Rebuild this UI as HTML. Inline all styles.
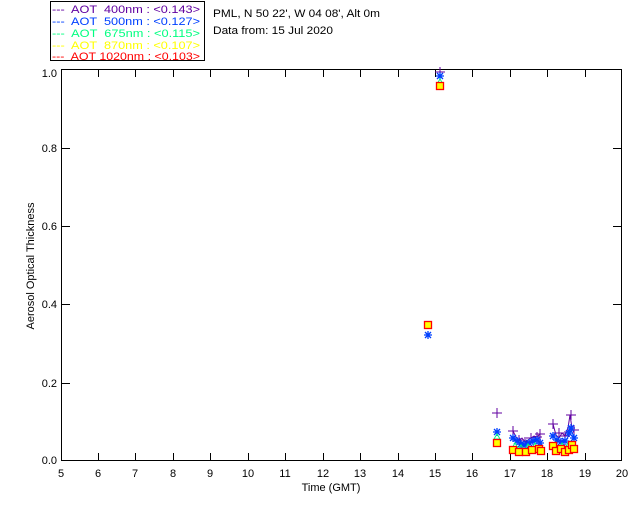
<!DOCTYPE html>
<html><head><style>
html,body{margin:0;padding:0;background:#fff;}
svg{display:block;}
text{font-family:"Liberation Sans",sans-serif;font-size:11px;white-space:pre;}
</style></head><body>
<svg width="640" height="512" viewBox="0 0 640 512" xmlns="http://www.w3.org/2000/svg" xml:space="preserve">
<rect width="640" height="512" fill="#fff"/>
<rect x="50.5" y="1.5" width="154" height="59" fill="#fff" stroke="#000"/>
<g font-size="11">
<text x="52" y="13" fill="#6000a0" textLength="148" lengthAdjust="spacingAndGlyphs">---  AOT  400nm : &lt;0.143&gt;</text>
<text x="52" y="25" fill="#0040ff" textLength="148" lengthAdjust="spacingAndGlyphs">---  AOT  500nm : &lt;0.127&gt;</text>
<text x="52" y="37" fill="#00ff80" textLength="148" lengthAdjust="spacingAndGlyphs">---  AOT  675nm : &lt;0.115&gt;</text>
<text x="52" y="49" fill="#ffff00" textLength="148" lengthAdjust="spacingAndGlyphs">---  AOT  870nm : &lt;0.107&gt;</text>
<text x="52" y="60" fill="#ff0000" textLength="148" lengthAdjust="spacingAndGlyphs">---  AOT 1020nm : &lt;0.103&gt;</text>
</g>
<text x="213" y="17" fill="#000" textLength="167" lengthAdjust="spacingAndGlyphs">PML, N 50 22', W 04 08', Alt 0m</text>
<text x="213" y="34" fill="#000" textLength="120" lengthAdjust="spacingAndGlyphs">Data from: 15 Jul 2020</text>
<rect x="61.5" y="69.5" width="560" height="391" fill="none" stroke="#000"/>
<g stroke="#000">
<path d="M98.5 461v-8M135.5 461v-8M173.5 461v-8M210.5 461v-8M248.5 461v-8M285.5 461v-8M323.5 461v-8M360.5 461v-8M398.5 461v-8M435.5 461v-8M472.5 461v-8M510.5 461v-8M547.5 461v-8M585.5 461v-8"/>
<path d="M98.5 69v8M135.5 69v8M173.5 69v8M210.5 69v8M248.5 69v8M285.5 69v8M323.5 69v8M360.5 69v8M398.5 69v8M435.5 69v8M472.5 69v8M510.5 69v8M547.5 69v8M585.5 69v8"/>
<path d="M61 148.5h9M61 226.5h9M61 304.5h9M61 383.5h9M622 148.5h-9M622 226.5h-9M622 304.5h-9M622 383.5h-9"/>
</g>
<g font-size="10" text-anchor="end">
<text x="57" y="77">1.0</text><text x="57" y="152">0.8</text><text x="57" y="230">0.6</text>
<text x="57" y="308">0.4</text><text x="57" y="387">0.2</text><text x="57" y="464">0.0</text>
</g>
<g font-size="10" text-anchor="middle">
<text x="61" y="477">5</text><text x="98" y="477">6</text><text x="135" y="477">7</text><text x="173" y="477">8</text><text x="210" y="477">9</text><text x="248" y="477">10</text><text x="285" y="477">11</text><text x="323" y="477">12</text><text x="360" y="477">13</text><text x="398" y="477">14</text><text x="435" y="477">15</text><text x="472" y="477">16</text><text x="510" y="477">17</text><text x="547" y="477">18</text><text x="585" y="477">19</text><text x="622" y="477">20</text>
<text x="331" y="491">Time (GMT)</text>
</g>
<text transform="translate(34 266) rotate(-90)" text-anchor="middle" font-size="10">Aerosol Optical Thickness</text>
<polyline fill="none" stroke="#6000a0" points="513,431 516,437 519,440 522,438 525,442 528,440 531,438 534,436 537,437 540,434"/>
<polyline fill="none" stroke="#6000a0" points="553,424 556,435 559,438 562,433 565,436 568,428 570,415 572,428 574,433"/>
<polyline fill="none" stroke="#0040ff" points="513,438 516,441 519,443 522,445 525,444 528,443 531,442 534,441 537,440 540,442"/>
<polyline fill="none" stroke="#0040ff" points="553,436 556,440 559,442 562,443 565,441 568,437 570,428 572,432 574,438"/>
<defs>
<path id="p" d="M-5 0h10M0 -5v10" stroke="#6000a0"/>
<path id="a" d="M-4 0h8M0 -4v8M-3 -3l6 6M-3 3l6 -6" stroke="#0040ff" stroke-width="1.3"/>
<path id="t" d="M-3 2l3 -5l3 5z" fill="none" stroke="#00ff80"/>
<rect id="s" x="-3.5" y="-3.5" width="7" height="7" fill="#ffff00" stroke="#ff0000" stroke-width="1.3"/>
</defs>
<use href="#a" x="428" y="335"/><use href="#s" x="428" y="325"/>
<use href="#p" x="440" y="72"/><use href="#a" x="440" y="76"/><use href="#t" x="440" y="82"/><use href="#s" x="440" y="86"/>
<use href="#p" x="497" y="413"/><use href="#a" x="497" y="432"/><use href="#t" x="497" y="437"/><use href="#s" x="497" y="443"/>
<use href="#p" x="513" y="431"/><use href="#p" x="519" y="440"/><use href="#p" x="525" y="442"/><use href="#p" x="531" y="438"/><use href="#p" x="537" y="437"/><use href="#p" x="540" y="434"/>
<use href="#a" x="513" y="438"/><use href="#a" x="517" y="441"/><use href="#a" x="521" y="444"/><use href="#a" x="525" y="445"/><use href="#a" x="529" y="443"/><use href="#a" x="533" y="441"/><use href="#a" x="537" y="440"/><use href="#a" x="540" y="443"/>
<use href="#t" x="515" y="446"/><use href="#t" x="521" y="448"/><use href="#t" x="528" y="447"/><use href="#t" x="535" y="446"/>
<use href="#s" x="513" y="450"/><use href="#s" x="519" y="452"/><use href="#s" x="526" y="452"/><use href="#s" x="532" y="450"/><use href="#s" x="539" y="449"/><use href="#s" x="541" y="451"/>
<use href="#p" x="553" y="424"/><use href="#p" x="559" y="433"/><use href="#p" x="565" y="436"/><use href="#p" x="571" y="415"/><use href="#p" x="574" y="430"/>
<use href="#a" x="553" y="436"/><use href="#a" x="557" y="440"/><use href="#a" x="561" y="442"/><use href="#a" x="565" y="441"/><use href="#a" x="569" y="433"/><use href="#a" x="571" y="428"/><use href="#a" x="574" y="438"/>
<use href="#t" x="555" y="445"/><use href="#t" x="562" y="446"/><use href="#t" x="569" y="444"/>
<use href="#s" x="553" y="446"/><use href="#s" x="556" y="451"/><use href="#s" x="561" y="449"/><use href="#s" x="565" y="452"/><use href="#s" x="569" y="450"/><use href="#s" x="572" y="445"/><use href="#s" x="574" y="449"/>
</svg>
</body></html>
